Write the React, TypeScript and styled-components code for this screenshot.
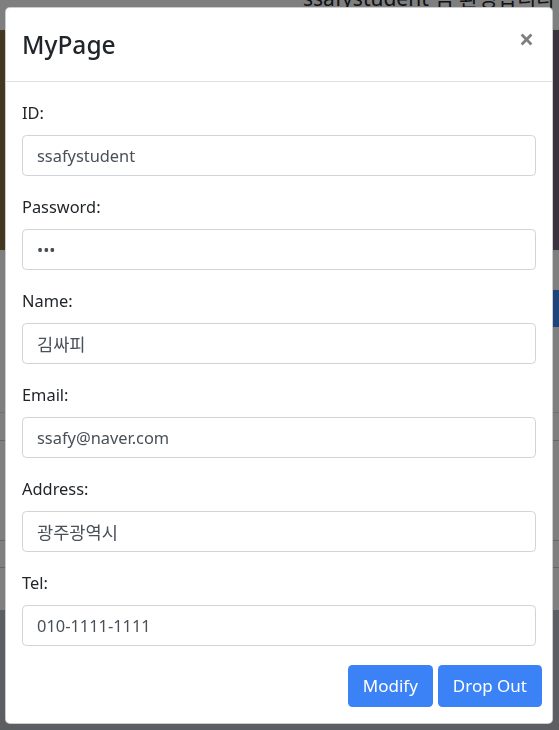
import styled, { createGlobalStyle } from "styled-components";

const GlobalStyle = createGlobalStyle`
  html, body {
    margin: 0;
    padding: 0;
    overflow: hidden;
  }
  body {
    font-family: "Noto Sans", "Noto Sans CJK KR", sans-serif;
    color: #212529;
  }
  * {
    box-sizing: border-box;
  }
`;

const fields = [
  { label: "ID:", type: "text", value: "ssafystudent" },
  { label: "Password:", type: "password", value: "123" },
  { label: "Name:", type: "text", value: "김싸피" },
  { label: "Email:", type: "email", value: "ssafy@naver.com" },
  { label: "Address:", type: "text", value: "광주광역시" },
  { label: "Tel:", type: "tel", value: "010-1111-1111" },
];

const isHangul = (s: string) => /[가-힣]/.test(s);

export default function App() {
  return (
    <>
      <GlobalStyle />
      <Page>
        <Navbar>
          <Greeting>ssafystudent 님 환영합니다</Greeting>
          <NavDivider />
        </Navbar>
        <Hero />
        <Content>
          <Toolbar>
            <ToolbarButton />
          </Toolbar>
          <Table>
            <TableRow $height={28} />
            <TableRow $height={100} />
            <TableRow $height={27} />
          </Table>
        </Content>
        <Footer />
      </Page>

      <Backdrop />

      <ModalWrap>
        <ModalContent>
          <ModalHeader>
            <ModalTitle>MyPage</ModalTitle>
            <CloseButton type="button" aria-label="Close">
              ×
            </CloseButton>
          </ModalHeader>
          <ModalBody>
            {fields.map((f) => (
              <FormGroup key={f.label}>
                <Label>{f.label}</Label>
                <Input
                  type={f.type}
                  defaultValue={f.value}
                  $hangul={isHangul(f.value)}
                  readOnly
                />
              </FormGroup>
            ))}
            <ButtonRow>
              <PrimaryButton type="button">Modify</PrimaryButton>
              <PrimaryButton type="button">Drop Out</PrimaryButton>
            </ButtonRow>
          </ModalBody>
        </ModalContent>
      </ModalWrap>
    </>
  );
}

/* background page (dimmed by the backdrop) */

const Page = styled.div`
  width: 100%;
  height: 730px;
  display: flex;
  flex-direction: column;
  background: #ffffff;
`;

const Navbar = styled.div`
  height: 30px;
  display: flex;
  align-items: flex-start;
  padding-left: 303px;
  gap: 6px;
  background: #ffffff;
`;

const Greeting = styled.span`
  margin-top: -12px;
  font-size: 21px;
  line-height: 1;
  white-space: nowrap;
  color: #212529;
`;

const NavDivider = styled.span`
  width: 1px;
  height: 12px;
  background: #212529;
`;

const Hero = styled.div`
  height: 220px;
  background: linear-gradient(
    90deg,
    #8a7040 0%,
    #5e4c38 30%,
    #4e4250 70%,
    #7a6680 100%
  );
`;

const Content = styled.div`
  height: 360px;
  display: flex;
  flex-direction: column;
  background: #ffffff;
`;

const Toolbar = styled.div`
  display: flex;
  justify-content: flex-end;
  padding-top: 40px;
`;

const ToolbarButton = styled.div`
  width: 90px;
  height: 37px;
  margin-right: -40px;
  background: #3d8af7;
`;

const Table = styled.div`
  margin-top: 85px;
  border-top: 1px solid #dee2e6;
`;

const TableRow = styled.div<{ $height: number }>`
  height: ${(p) => p.$height}px;
  border-bottom: 1px solid #c8ccd0;
`;

const Footer = styled.div`
  flex: 1;
  background: #b7bdc7;
`;

const Backdrop = styled.div`
  position: fixed;
  inset: 0;
  background: rgba(0, 0, 0, 0.5);
`;

/* modal */

const ModalWrap = styled.div`
  position: fixed;
  inset: 0;
  padding: 7px 6px 0 5px;
`;

const ModalContent = styled.div`
  width: 548px;
  background: #ffffff;
  border: 1px solid rgba(0, 0, 0, 0.2);
  border-radius: 5px;
`;

const ModalHeader = styled.div`
  display: flex;
  align-items: flex-start;
  padding: 17.6px 16px;
  border-bottom: 1px solid #dee2e6;
`;

const ModalTitle = styled.h4`
  margin: 0;
  font-size: 24.5px;
  font-weight: 500;
  line-height: 37.8px;
  color: #212529;
`;

const CloseButton = styled.button`
  margin: -17.6px -17.6px -17.6px auto;
  padding: 17.6px 19.6px 17.6px 17.6px;
  border: 0;
  background: transparent;
  font-family: "Noto Sans", sans-serif;
  font-size: 26.4px;
  font-weight: 700;
  line-height: 1;
  color: #000000;
  opacity: 0.5;
  cursor: pointer;
`;

const ModalBody = styled.div`
  padding: 17.6px 16px 16px;
`;

const FormGroup = styled.div`
  margin-bottom: 17.6px;
`;

const Label = styled.label`
  display: block;
  margin-bottom: 8.6px;
  font-size: 16.4px;
  line-height: 26.4px;
  color: #212529;
`;

const Input = styled.input<{ $hangul?: boolean }>`
  display: block;
  width: 100%;
  height: 41.4px;
  padding: 6.6px 14px;
  border: 1px solid #ced4da;
  border-radius: 4.4px;
  background: #ffffff;
  font-family: "Noto Sans", "Noto Sans CJK KR", sans-serif;
  font-size: ${(p) => (p.$hangul ? "17.6px" : "16.4px")};
  line-height: 26.4px;
  color: #495057;
  outline: none;
`;

const ButtonRow = styled.div`
  display: flex;
  justify-content: flex-end;
  gap: 5px;
  padding-top: 2px;
  margin-right: -6px;
`;

const PrimaryButton = styled.button`
  padding: 6.6px 14px;
  border: 1px solid transparent;
  border-radius: 4.4px;
  background: #3a82f6;
  font-family: "Noto Sans", sans-serif;
  font-size: 17px;
  line-height: 26.4px;
  color: #ffffff;
  cursor: pointer;
`;
